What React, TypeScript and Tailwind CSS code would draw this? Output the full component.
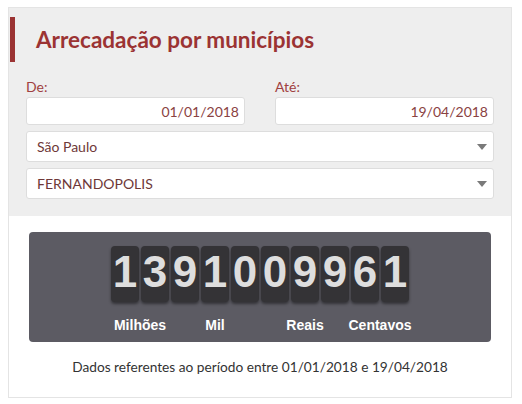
import React from "react";

const groups = [
  { digits: "13", label: "Milhões", width: "w-[58px]" },
  { digits: "910", label: "Mil", width: "w-[88px]" },
  { digits: "099", label: "Reais", width: "w-[88px]" },
  { digits: "61", label: "Centavos", width: "w-[58px]" },
];

function Caret() {
  return (
    <svg width="10" height="6" viewBox="0 0 10 6" className="shrink-0">
      <path d="M0 0 L10 0 L5 6 Z" fill="#7a7a7a" />
    </svg>
  );
}

function DateField({ label, value }: { label: string; value: string }) {
  return (
    <div className="flex flex-col">
      <span className="text-[14px] leading-[20px] text-[#a04040]">{label}</span>
      <div className="h-[28px] bg-white border border-[#dddddd] rounded-[3px] flex items-center justify-end pr-[5px] text-[14px] text-[#8a4242]">
        {value}
      </div>
    </div>
  );
}

function SelectBox({ value }: { value: string }) {
  return (
    <div className="h-[31px] bg-white border border-[#dddddd] rounded-[3px] flex items-center justify-between pl-[10px] pr-[6px] text-[14px] text-[#6e3838]">
      <span>{value}</span>
      <Caret />
    </div>
  );
}

export default function App() {
  return (
    <div className="w-[522px] h-[404px] bg-white pt-[7px] pl-[8px] font-['Lato',sans-serif]">
      <div className="w-[504px] border border-[#e4e4e4]">
        <div className="bg-[#eeeeee] pt-[9px] pb-[17px]">
          <div className="flex items-center h-[45px] pl-[1px]">
            <div className="w-[5px] h-[45px] bg-[#9b3333]" />
            <h2 className="ml-[21px] text-[22.5px] font-bold text-[#9b3333]">
              Arrecadação por municípios
            </h2>
          </div>

          <div className="px-[17px] mt-[15px] flex flex-col gap-[6px]">
            <div className="grid grid-cols-2 gap-x-[30px]">
              <DateField label="De:" value="01/01/2018" />
              <DateField label="Até:" value="19/04/2018" />
            </div>
            <SelectBox value="São Paulo" />
            <SelectBox value="FERNANDOPOLIS" />
          </div>
        </div>

        <div className="bg-white pt-[16px] px-[20px] pb-[19px]">
          <div className="bg-[#5c5b63] rounded-[4px] h-[110px] pt-[14px] flex justify-center">
            <div className="flex gap-[2px]">
              {groups.map((g) => (
                <div key={g.label} className={`${g.width} flex flex-col`}>
                  <div className="flex gap-[2px]">
                    {g.digits.split("").map((d, i) => (
                      <div
                        key={i}
                        className="w-[28px] h-[56px] bg-[#343336] rounded-[4px] shadow-[0_2px_3px_rgba(0,0,0,0.45)] flex items-center justify-center pb-[4px] font-['Liberation_Sans',sans-serif] font-bold text-[44px] text-[#dedede]"
                      >
                        {d}
                      </div>
                    ))}
                  </div>
                  <div className="mt-[13px] flex justify-center">
                    <span className="shrink-0 whitespace-nowrap font-['Liberation_Sans',sans-serif] font-bold text-[14px] leading-[20px] text-white">
                      {g.label}
                    </span>
                  </div>
                </div>
              ))}
            </div>
          </div>
          <p className="mt-[15px] text-center text-[13.7px] text-[#333333]">
            Dados referentes ao período entre 01/01/2018 e 19/04/2018
          </p>
        </div>
      </div>
    </div>
  );
}
